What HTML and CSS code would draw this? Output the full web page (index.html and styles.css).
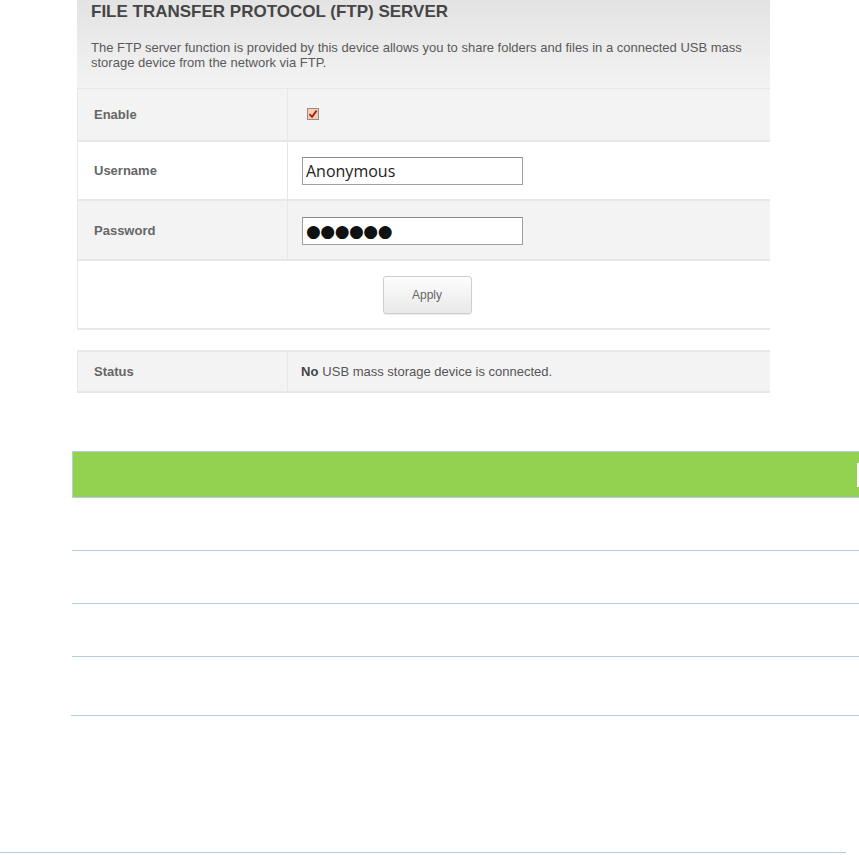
FILE: index.html
```html
<!DOCTYPE html>
<html lang="en">
<head>
  <meta charset="UTF-8" />
  <meta name="viewport" content="width=device-width, initial-scale=1.0" />
  <title>FTP Server</title>
  <link rel="stylesheet" href="styles.css">
</head>
<body>
  <section class="ftp-panel">
    <div class="panel-head">
      <h1>FILE TRANSFER PROTOCOL (FTP) SERVER</h1>
      <p>The FTP server function is provided by this device allows you to share folders and files in a connected USB mass storage device from the network via FTP.</p>
    </div>

    <div class="form-table">
      <div class="row row-enable shaded">
        <div class="label">Enable</div>
        <div class="value">
          <svg class="check" viewBox="0 0 12 12" width="12" height="12">
            <rect x="0.5" y="0.5" width="11" height="11" fill="#f3cdb4" stroke="#9a8a80" />
            <path d="M2.5 6.2 L5 8.8 L9.6 2.6" fill="none" stroke="#a3200e" stroke-width="1.8" />
          </svg>
        </div>
      </div>
      <div class="row row-user">
        <div class="label">Username</div>
        <div class="value"><input type="text" class="field" value="Anonymous" /></div>
      </div>
      <div class="row row-pass shaded">
        <div class="label">Password</div>
        <div class="value"><input type="text" class="field pw" value="●●●●●●" /></div>
      </div>
      <div class="row row-apply">
        <button class="apply">Apply</button>
      </div>
    </div>

    <div class="form-table status-table">
      <div class="row row-status shaded">
        <div class="label">Status</div>
        <div class="value status-text"><strong>No</strong> USB mass storage device is connected.</div>
      </div>
    </div>
  </section>

  <section class="list-table">
    <div class="list-head">
      <span class="head-divider"></span>
    </div>
    <div class="list-row"></div>
    <div class="list-row"></div>
    <div class="list-row"></div>
    <div class="list-row tall"></div>
  </section>

  <div class="bottom-rule"></div>
</body>
</html>
```

FILE: styles.css
```css
:root {
  --row-shade: #f3f3f3;
  --row-line: #e7e7e7;
  --label-color: #666;
  --text-color: #555;
  --green: #93d251;
  --blue-line: #b2cde4;
}

html, body {
  overflow: hidden;
}

body {
  margin: 0;
  font-family: 'Liberation Sans', Arial, sans-serif;
  background: #fff;
  color: var(--text-color);
}

/* FTP settings panel */
.ftp-panel {
  margin-left: 77px;
  width: 693px;
}

.panel-head {
  height: 88px;
  padding-left: 14px;
  box-sizing: border-box;
  background: linear-gradient(#e3e3e3, #f3f3f3);
}

.panel-head h1 {
  margin: 0;
  padding-top: 2px;
  font-size: 17px;
  line-height: 20px;
  font-weight: 700;
  color: #464646;
}

.panel-head p {
  margin: 18px 0 0 0;
  width: 670px;
  font-size: 13px;
  line-height: 15px;
  color: #5a5a5a;
}

.form-table {
  border-left: 1px solid var(--row-line);
}

.row {
  display: flex;
  align-items: center;
  background: #fff;
  border-bottom: 2px solid var(--row-line);
  box-sizing: border-box;
}

.row.shaded {
  background: var(--row-shade);
}

.row-enable {
  height: 54px;
  border-top: 1px solid var(--row-line);
}

.row-user {
  height: 59px;
}

.row-pass {
  height: 60px;
}

.row-apply {
  height: 69px;
  justify-content: center;
}

.label {
  width: 210px;
  align-self: stretch;
  display: flex;
  align-items: center;
  padding-left: 16px;
  box-sizing: border-box;
  border-right: 1px solid var(--row-line);
  font-size: 13px;
  font-weight: 700;
  color: var(--label-color);
}

.value {
  padding-left: 14px;
  display: flex;
  align-items: center;
}

.check {
  display: block;
  margin-left: 5px;
  margin-top: -2px;
}

.field {
  width: 221px;
  height: 28px;
  box-sizing: border-box;
  margin: 1px 0 0 0;
  padding: 0 3px;
  border: 1px solid #a0a0a0;
  border-top-color: #8a8a8a;
  background: #fff;
  font-family: 'Open Sans', sans-serif;
  font-size: 16px;
  color: #222;
  outline: none;
}

.field.pw {
  font-family: 'DejaVu Sans', sans-serif;
  font-size: 17px;
  color: #111;
  letter-spacing: -0.5px;
}

.apply {
  width: 89px;
  height: 38px;
  margin-left: 6px;
  margin-top: 1px;
  border: 1px solid #cfcfcf;
  border-radius: 3px;
  background: linear-gradient(#fdfdfd, #e9e9e9);
  box-shadow: 0 1px 1px rgba(0, 0, 0, 0.08);
  font-family: 'Liberation Sans', Arial, sans-serif;
  font-size: 12px;
  color: #666;
}

.status-table {
  margin-top: 20px;
}

.row-status {
  height: 43px;
  border-top: 2px solid var(--row-line);
}

.status-text {
  padding-left: 13px;
  font-size: 13px;
  color: #555;
}

.status-text strong {
  color: #444;
  margin-right: 4px;
}

/* Lower list table */
.list-table {
  margin: 58px 0 0 72px;
}

.list-head {
  height: 47px;
  box-sizing: border-box;
  background: var(--green);
  border: 1px solid var(--blue-line);
  border-right: none;
  display: flex;
  align-items: center;
}

.head-divider {
  margin-left: 784px;
  width: 2px;
  height: 24px;
  background: #fff;
}

.list-row {
  height: 53px;
  box-sizing: border-box;
  border-bottom: 1px solid var(--blue-line);
}

.list-row.tall {
  height: 59px;
  margin-left: -1px;
}

.bottom-rule {
  margin-top: 136px;
  width: 846px;
  height: 1px;
  background: var(--blue-line);
}
```
